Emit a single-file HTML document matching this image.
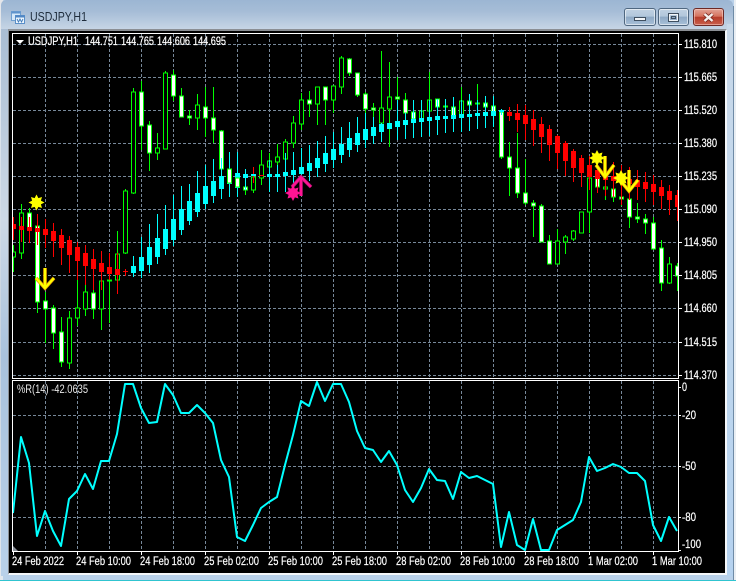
<!DOCTYPE html>
<html lang="en">
<head>
<meta charset="utf-8">
<title>USDJPY,H1</title>
<style>
html,body{margin:0;padding:0;background:#fff}
#w{position:relative;width:736px;height:581px;overflow:hidden;background:#b9d1ea;font-family:"Liberation Sans",sans-serif}
#corner{position:absolute;left:0;top:0;width:3px;height:581px;background:linear-gradient(180deg,#e4e6ea,#dfe6ee 15%,#c6d2de 60%,#e3e8ee)}
#left{position:absolute;left:1px;top:28px;width:8px;height:548px;background:linear-gradient(180deg,#a9bdd3,#cdd9e6 35%,#a9c2dc 60%,#b9d1ea)}
#title{position:absolute;left:1px;top:0;width:732px;height:29px;border-radius:5px 5px 0 0;background:linear-gradient(180deg,#9cb6d3,#a6bdd7 40%,#c6d5e5)}
#right{position:absolute;left:727px;top:24px;width:6px;height:552px;background:linear-gradient(180deg,#c8d8e8,#c2d8ee 40%,#b5d2ef)}
#edgeR{position:absolute;left:733px;top:6px;width:1px;height:574px;background:#6f8ba6}
#edgeR2{position:absolute;left:734px;top:0;width:2px;height:581px;background:#e9eef3}
#edgeB{position:absolute;left:0;top:580px;width:736px;height:1px;background:#30c4d0}
#client{position:absolute;left:8px;top:29px;width:719px;height:546px;box-sizing:border-box;background:#000;border:1px solid #8b8f94;border-top-width:2px;border-right:2px solid #f4f7fa;border-bottom:2px solid #f4f7fa}
.b{position:absolute;top:8px;height:18px;box-sizing:border-box;border:1px solid #4f6780;border-radius:3px;box-shadow:inset 0 0 0 1px rgba(255,255,255,.55);background:linear-gradient(180deg,#c0d1e2,#b2c7dc 45%,#8ea9c5 50%,#a9c0d8)}
#mn{left:624px;width:32px}
#mx{left:658px;width:31px}
#cl{left:693px;width:31px;border-color:#6d2a26;box-shadow:inset 0 0 0 1px rgba(255,220,210,.5);background:linear-gradient(180deg,#e2a497,#d6735f 45%,#b73c2a 52%,#c9604c)}
svg{position:absolute;left:0;top:0}
</style>
</head>
<body>
<div id="w">
<div id="corner"></div>
<div id="left"></div>
<div id="title"></div>
<div id="right"></div>
<div id="edgeR"></div>
<div id="edgeR2"></div>
<div id="edgeB"></div>
<div class="b" id="mn"></div>
<div class="b" id="mx"></div>
<div class="b" id="cl"></div>
<div id="client"></div>
<svg width="736" height="581" viewBox="0 0 736 581" xmlns="http://www.w3.org/2000/svg">
<defs>
<clipPath id="m"><rect x="13" y="34" width="665" height="344"/></clipPath>
<clipPath id="s"><rect x="13" y="381" width="665" height="170"/></clipPath>
</defs>

<!-- title icon -->
<g shape-rendering="crispEdges">
<rect x="11.500" y="11.500" width="9" height="9" fill="#d6e8f8" stroke="#6f9fd0"/>
<rect x="11.500" y="11.500" width="9" height="2" fill="#5f93cc"/>
<rect x="15.500" y="15.500" width="9" height="8" fill="#eef6fd" stroke="#5a8fc8"/>
<rect x="15.500" y="15.500" width="9" height="2" fill="#4f86c4"/>
</g>
<path d="M17 19l1.500 3 1.500-3 1.500 3 1.500-3" fill="none" stroke="#3c78b8" stroke-width=".9"/>
<text x="30" y="21" font-size="13" fill="#1e2c3c" textLength="57" lengthAdjust="spacingAndGlyphs" font-family="Liberation Sans, sans-serif">USDJPY,H1</text>

<!-- window glyphs -->
<rect x="634.500" y="17.500" width="11" height="3" fill="#f2f5f8" stroke="#3f4f60"/>
<rect x="668.500" y="13.500" width="10" height="8" fill="none" stroke="#3f4f60" stroke-width="1"/>
<rect x="669.500" y="14.500" width="8" height="6" fill="none" stroke="#f2f5f8" stroke-width="1"/>
<rect x="671.500" y="16.500" width="4" height="2" fill="#8ea9c5" stroke="#3f4f60"/>
<path d="M704.500 14l8 7M712.500 14l-8 7" stroke="#7a2a22" stroke-width="4" fill="none"/>
<path d="M704.500 14l8 7M712.500 14l-8 7" stroke="#f5f0ee" stroke-width="2.400" fill="none"/>

<!-- grid -->
<g shape-rendering="crispEdges" stroke="#778899" stroke-width="1" stroke-dasharray="3 2" fill="none">
<path d="M13 44.500H678M13 77.500H678M13 110.500H678M13 143.500H678M13 176.500H678M13 209.500H678M13 242.500H678M13 275.500H678M13 308.500H678M13 342.500H678M13 375.500H678"/>
<path d="M45.500 34V378M77.500 34V378M109.500 34V378M141.500 34V378M173.500 34V378M205.500 34V378M237.500 34V378M269.500 34V378M301.500 34V378M333.500 34V378M365.500 34V378M397.500 34V378M429.500 34V378M461.500 34V378M493.500 34V378M525.500 34V378M557.500 34V378M589.500 34V378M621.500 34V378M653.500 34V378"/>
<path d="M13 415.500H678M13 466.500H678M13 517.500H678"/>
<path d="M45.500 381V551M77.500 381V551M109.500 381V551M141.500 381V551M173.500 381V551M205.500 381V551M237.500 381V551M269.500 381V551M301.500 381V551M333.500 381V551M365.500 381V551M397.500 381V551M429.500 381V551M461.500 381V551M493.500 381V551M525.500 381V551M557.500 381V551M589.500 381V551M621.500 381V551M653.500 381V551"/>
</g>

<g clip-path="url(#m)" shape-rendering="crispEdges">
<!-- green wicks -->
<path fill="none" stroke="#00ff00" d="M13.500 245V272M21.500 204V259M29.500 208V230M37.500 214V313M45.500 292V343M53.500 305V349M61.500 317V367M69.500 311V369M77.500 279V326M85.500 284V316M93.500 287V319M101.500 281V330M109.500 280V323M117.500 231V294M125.500 189V254M133.500 88V194M141.500 81V150M149.500 121V171M157.500 133V160M165.500 71V149M173.500 70V101M181.500 88V117M189.500 110V125M197.500 94V130M205.500 87V137M213.500 87V143M221.500 130V170M229.500 168V184M237.500 175V188M245.500 185V195M253.500 175V193M261.500 150V185M269.500 153V192M277.500 144V170M285.500 139V170M293.500 116V148M301.500 93V130M309.500 91V117M317.500 87V125M325.500 87V125M333.500 86V113M341.500 56V94M349.500 58V76M357.500 73V97M365.500 92V113M373.500 103V117M381.500 51V123M389.500 62V147M397.500 77V100M405.500 93V114M413.500 112V120M421.500 111V120M429.500 72V111M437.500 99V108M445.500 106V110M453.500 107V118M461.500 87V116M469.500 94V106M477.500 84V106M485.500 96V108M493.500 96V115M501.500 109V159M509.500 142V196M517.500 133V198M525.500 159V205M533.500 200V237M541.500 204V242M549.500 235V264M557.500 229V264M565.500 235V254M573.500 230V241M581.500 212V233M589.500 177V233M597.500 178V190M605.500 187V200M613.500 189V202M621.500 197V206M629.500 199V228M637.500 203V223M645.500 214V234M653.500 217V250M661.500 240V291M669.500 257V284M677.500 263V291"/>
<!-- hollow bodies -->
<path fill="#000" stroke="#00ff00" d="M11.500 252h4V257h-4zM19.500 213h4V253h-4zM67.500 318h4V363h-4zM75.500 308h4V318h-4zM83.500 292h4V309h-4zM99.500 281h4V309h-4zM107.500 280h4V281h-4zM115.500 254h4V280h-4zM123.500 191h4V253h-4zM131.500 92h4V193h-4zM155.500 148h4V153h-4zM163.500 73h4V149h-4zM195.500 105h4V118h-4zM251.500 177h4V190h-4zM259.500 165h4V178h-4zM267.500 161h4V167h-4zM275.500 157h4V162h-4zM283.500 142h4V159h-4zM291.500 123h4V143h-4zM299.500 100h4V124h-4zM315.500 87h4V104h-4zM331.500 86h4V100h-4zM339.500 58h4V87h-4zM379.500 108h4V123h-4zM387.500 97h4V109h-4zM419.500 111h4V119h-4zM427.500 100h4V111h-4zM443.500 106h4V107h-4zM459.500 101h4V115h-4zM475.500 103h4V104h-4zM555.500 241h4V264h-4zM563.500 237h4V242h-4zM571.500 231h4V239h-4zM579.500 212h4V233h-4zM587.500 178h4V212h-4zM603.500 187h4V189h-4zM667.500 264h4V283h-4z"/>
<!-- white bodies -->
<path fill="#ffffff" stroke="#00ff00" d="M27.500 213h4V230h-4zM35.500 226h4V302h-4zM43.500 301h4V309h-4zM51.500 308h4V333h-4zM59.500 332h4V362h-4zM91.500 293h4V309h-4zM139.500 92h4V126h-4zM147.500 125h4V153h-4zM171.500 75h4V96h-4zM179.500 96h4V117h-4zM187.500 116h4V118h-4zM203.500 107h4V118h-4zM211.500 118h4V130h-4zM219.500 131h4V169h-4zM243.500 187h4V190h-4zM307.500 100h4V104h-4zM323.500 87h4V100h-4zM347.500 59h4V73h-4zM355.500 73h4V95h-4zM363.500 94h4V109h-4zM371.500 108h4V110h-4zM395.500 97h4V99h-4zM403.500 100h4V113h-4zM411.500 112h4V119h-4zM435.500 99h4V107h-4zM451.500 107h4V117h-4zM467.500 101h4V105h-4zM483.500 103h4V107h-4zM491.500 106h4V114h-4zM499.500 112h4V157h-4zM507.500 157h4V168h-4zM515.500 168h4V193h-4zM523.500 193h4V203h-4zM531.500 203h4V206h-4zM539.500 206h4V242h-4zM547.500 241h4V264h-4zM595.500 178h4V187h-4zM611.500 189h4V197h-4zM619.500 197h4V199h-4zM627.500 199h4V217h-4zM635.500 217h4V219h-4zM643.500 219h4V223h-4zM651.500 223h4V249h-4zM659.500 248h4V283h-4zM675.500 266h4V276h-4z"/>
<!-- red wicks -->
<path fill="none" stroke="#ff0000" d="M13.500 217V240M21.500 217V242M29.500 217V243M37.500 214V245M45.500 219V248M53.500 223V257M61.500 229V265M69.500 236V273M77.500 242V280M85.500 245V285M93.500 249V290M101.500 251V290M109.500 253V280M117.500 253V294M125.500 269V276M253.500 167V183M509.500 107V121M517.500 104V132M525.500 105V140M533.500 110V146M541.500 117V153M549.500 125V161M557.500 135V169M565.500 141V176M573.500 149V182M581.500 155V187M589.500 156V190M597.500 158V193M605.500 160V196M613.500 162V197M621.500 165V205M629.500 167V200M637.500 170V200M645.500 172V202M653.500 175V205M661.500 180V209M669.500 185V215M677.500 190V221"/>
<!-- cyan wicks -->
<path fill="none" stroke="#00ffff" d="M133.500 256V277M141.500 237V278M149.500 224V273M157.500 214V264M165.500 205V255M173.500 195V246M181.500 186V235M189.500 184V225M197.500 171V217M205.500 165V209M213.500 159V203M221.500 158V199M229.500 152V197M237.500 152V197M245.500 169V190M269.500 160V192M277.500 165V192M285.500 153V192M293.500 152V193M301.500 148V195M309.500 145V181M317.500 141V177M325.500 136V172M333.500 132V168M341.500 127V163M349.500 122V157M357.500 117V152M365.500 113V148M373.500 117V144M381.500 123V142M397.500 100V140M405.500 113V139M413.500 100V138M421.500 100V137M429.500 100V136M437.500 99V135M445.500 99V133M453.500 97V132M461.500 100V132M469.500 94V131M477.500 100V129M485.500 96V128M493.500 96V127M501.500 109V115"/>
<!-- red bodies -->
<path fill="#ff0000" d="M11 224h5V229h-5zM19 226h5V230h-5zM27 227h5V231h-5zM35 228h5V232h-5zM43 229h5V235h-5zM51 231h5V241h-5zM59 235h5V248h-5zM67 240h5V255h-5zM75 247h5V261h-5zM83 253h5V266h-5zM91 259h5V269h-5zM99 263h5V272h-5zM107 267h5V274h-5zM115 269h5V275h-5zM123 271h5V272h-5zM251 175h5V176h-5zM259 175h5V176h-5zM507 112h5V116h-5zM515 113h5V120h-5zM523 115h5V124h-5zM531 119h5V130h-5zM539 124h5V137h-5zM547 129h5V145h-5zM555 136h5V153h-5zM563 143h5V161h-5zM571 151h5V168h-5zM579 158h5V173h-5zM587 165h5V177h-5zM595 170h5V179h-5zM603 175h5V180h-5zM611 176h5V181h-5zM619 177h5V183h-5zM627 179h5V184h-5zM635 180h5V187h-5zM643 182h5V189h-5zM651 184h5V192h-5zM659 187h5V196h-5zM667 191h5V200h-5zM675 195h5V207h-5z"/>
<!-- cyan bodies -->
<path fill="#00ffff" d="M131 266h5V273h-5zM139 257h5V271h-5zM147 247h5V265h-5zM155 238h5V257h-5zM163 229h5V249h-5zM171 219h5V240h-5zM179 209h5V230h-5zM187 201h5V221h-5zM195 193h5V212h-5zM203 186h5V204h-5zM211 181h5V196h-5zM219 176h5V189h-5zM227 173h5V184h-5zM235 173h5V188h-5zM243 174h5V178h-5zM251 174h5V176h-5zM267 174h5V177h-5zM275 174h5V177h-5zM283 172h5V176h-5zM291 170h5V175h-5zM299 167h5V174h-5zM307 163h5V171h-5zM315 158h5V168h-5zM323 153h5V164h-5zM331 149h5V160h-5zM339 144h5V155h-5zM347 138h5V150h-5zM355 133h5V145h-5zM363 129h5V140h-5zM371 127h5V136h-5zM379 124h5V132h-5zM387 123h5V129h-5zM395 121h5V127h-5zM403 120h5V125h-5zM411 119h5V123h-5zM419 118h5V122h-5zM427 117h5V121h-5zM435 116h5V120h-5zM443 116h5V119h-5zM451 115h5V119h-5zM459 114h5V118h-5zM467 114h5V117h-5zM475 113h5V116h-5zM483 112h5V116h-5zM491 111h5V116h-5zM499 110h5V112h-5z"/>
<path fill="#ffffff" stroke="#00ff00" d="M227.500 169h4V183h-4zM235.500 178h4V187h-4z"/>
</g>

<!-- arrows and stars -->
<g clip-path="url(#m)" fill="none" stroke-linejoin="miter">
<g stroke="#e89a00" stroke-width="3.600">
<path d="M45 268V286M36 278L45 288L54 278"/>
<path d="M605 156V175M596 165L605 177L614 165"/>
<path d="M629 170V189M620 180L629 191L638 180"/>
</g>
<g stroke="#ffff00" stroke-width="2.200">
<path d="M45 268V286M36 278L45 288L54 278"/>
<path d="M605 156V175M596 165L605 177L614 165"/>
<path d="M629 170V189M620 180L629 191L638 180"/>
</g>
<g stroke="#b01070" stroke-width="3.600">
<path d="M301 178V196M292 187L301 177L311 187"/>
</g>
<g stroke="#ff1493" stroke-width="2.200">
<path d="M301 178V196M292 187L301 177L311 187"/>
</g>
</g>
<polygon transform="translate(36.500 202.500)" fill="#ffff00" points="0,-8 1.900,-4.400 5.500,-5.500 4.400,-1.900 8,0 4.400,1.900 5.500,5.500 1.900,4.400 0,8 -1.900,4.400 -5.500,5.500 -4.400,1.900 -8,0 -4.400,-1.900 -5.500,-5.500 -1.900,-4.400"/>
<polygon transform="translate(597 158)" fill="#ffff00" points="0,-8 1.900,-4.400 5.500,-5.500 4.400,-1.900 8,0 4.400,1.900 5.500,5.500 1.900,4.400 0,8 -1.900,4.400 -5.500,5.500 -4.400,1.900 -8,0 -4.400,-1.900 -5.500,-5.500 -1.900,-4.400"/>
<polygon transform="translate(621 178)" fill="#ffff00" points="0,-8 1.900,-4.400 5.500,-5.500 4.400,-1.900 8,0 4.400,1.900 5.500,5.500 1.900,4.400 0,8 -1.900,4.400 -5.500,5.500 -4.400,1.900 -8,0 -4.400,-1.900 -5.500,-5.500 -1.900,-4.400"/>
<polygon transform="translate(293 193)" fill="#ff1493" points="0,-8 1.900,-4.400 5.500,-5.500 4.400,-1.900 8,0 4.400,1.900 5.500,5.500 1.900,4.400 0,8 -1.900,4.400 -5.500,5.500 -4.400,1.900 -8,0 -4.400,-1.900 -5.500,-5.500 -1.900,-4.400"/>

<!-- indicator line -->
<g clip-path="url(#s)">
<polyline fill="none" stroke="#00ffff" stroke-width="2" stroke-linejoin="round" points="13,513 21,437 29,463 37,536 45,511 53,531 61,546 69,499 77,491 85,474 93,489 101,461 109,461 117,434 125,384 133,384 141,408 149,423 157,422 165,384 173,395 181,413 189,413 197,405 205,413 213,423 221,460 229,477 237,537 245,541 253,525 261,508 269,502 277,497 285,465 293,435 301,401 309,406 317,382 325,401 333,384 341,384 349,402 357,431 365,448 373,450 381,462 389,451 397,465 405,490 413,502 421,488 429,469 437,480 445,481 453,499 461,472 469,478 477,476 485,480 493,484 501,547 509,512 517,545 525,550 533,519 541,550 549,550 557,530 565,525 573,520 581,502 589,457 597,471 605,468 613,464 621,467 629,473 637,473 645,481 653,525 661,541 669,517 677,531"/>
</g>

<!-- frames and ticks -->
<g shape-rendering="crispEdges" fill="none" stroke="#ffffff">
<rect x="12.500" y="33.500" width="666" height="345"/>
<rect x="12.500" y="380.500" width="666" height="171"/>
<path d="M678 44.500h4M678 77.500h4M678 110.500h4M678 143.500h4M678 176.500h4M678 209.500h4M678 242.500h4M678 275.500h4M678 308.500h4M678 342.500h4M678 375.500h4"/>
<path d="M678 387.500h3M678 415.500h3M678 466.500h3M678 517.500h3M678 550.500h3"/>
<path d="M13.500 552v3M77.500 552v3M141.500 552v3M205.500 552v3M269.500 552v3M333.500 552v3M397.500 552v3M461.500 552v3M525.500 552v3M589.500 552v3M653.500 552v3"/>
</g>
<polygon points="13,546 18,551 13,551" fill="#8a8f98"/>
<polygon points="16,40 24,40 20,44" fill="#ffffff"/>

<!-- labels -->
<g font-size="11.500" fill="#ffffff" stroke="#ffffff" stroke-width=".2" font-family="Liberation Sans, sans-serif">
<text x="28" y="45" textLength="50" lengthAdjust="spacingAndGlyphs">USDJPY,H1</text>
<text x="85" y="45" textLength="33" lengthAdjust="spacingAndGlyphs">144.751</text>
<text x="121" y="45" textLength="33" lengthAdjust="spacingAndGlyphs">144.765</text>
<text x="157" y="45" textLength="33" lengthAdjust="spacingAndGlyphs">144.606</text>
<text x="193" y="45" textLength="33" lengthAdjust="spacingAndGlyphs">144.695</text>
<text x="684" y="48" textLength="33" lengthAdjust="spacingAndGlyphs">115.810</text>
<text x="684" y="81" textLength="33" lengthAdjust="spacingAndGlyphs">115.665</text>
<text x="684" y="114" textLength="33" lengthAdjust="spacingAndGlyphs">115.520</text>
<text x="684" y="147" textLength="33" lengthAdjust="spacingAndGlyphs">115.380</text>
<text x="684" y="180" textLength="33" lengthAdjust="spacingAndGlyphs">115.235</text>
<text x="684" y="213" textLength="33" lengthAdjust="spacingAndGlyphs">115.090</text>
<text x="684" y="246" textLength="33" lengthAdjust="spacingAndGlyphs">114.950</text>
<text x="684" y="279" textLength="33" lengthAdjust="spacingAndGlyphs">114.805</text>
<text x="684" y="312" textLength="33" lengthAdjust="spacingAndGlyphs">114.660</text>
<text x="684" y="346" textLength="33" lengthAdjust="spacingAndGlyphs">114.515</text>
<text x="684" y="379" textLength="33" lengthAdjust="spacingAndGlyphs">114.370</text>
<text x="682" y="391" textLength="5" lengthAdjust="spacingAndGlyphs">0</text>
<text x="682" y="419" textLength="14" lengthAdjust="spacingAndGlyphs">-20</text>
<text x="682" y="470" textLength="14" lengthAdjust="spacingAndGlyphs">-50</text>
<text x="682" y="521" textLength="14" lengthAdjust="spacingAndGlyphs">-80</text>
<text x="682" y="548" textLength="19" lengthAdjust="spacingAndGlyphs">-100</text>
<text x="17" y="393" textLength="71" lengthAdjust="spacingAndGlyphs" fill="#e8e8e8" stroke="none">%R(14) -42.0635</text>
<text x="12" y="565" textLength="52" lengthAdjust="spacingAndGlyphs">24 Feb 2022</text>
<text x="76" y="565" textLength="55" lengthAdjust="spacingAndGlyphs">24 Feb 10:00</text>
<text x="140" y="565" textLength="55" lengthAdjust="spacingAndGlyphs">24 Feb 18:00</text>
<text x="204" y="565" textLength="55" lengthAdjust="spacingAndGlyphs">25 Feb 02:00</text>
<text x="268" y="565" textLength="55" lengthAdjust="spacingAndGlyphs">25 Feb 10:00</text>
<text x="332" y="565" textLength="55" lengthAdjust="spacingAndGlyphs">25 Feb 18:00</text>
<text x="396" y="565" textLength="55" lengthAdjust="spacingAndGlyphs">28 Feb 02:00</text>
<text x="460" y="565" textLength="55" lengthAdjust="spacingAndGlyphs">28 Feb 10:00</text>
<text x="524" y="565" textLength="55" lengthAdjust="spacingAndGlyphs">28 Feb 18:00</text>
<text x="588" y="565" textLength="50" lengthAdjust="spacingAndGlyphs">1 Mar 02:00</text>
<text x="652" y="565" textLength="50" lengthAdjust="spacingAndGlyphs">1 Mar 10:00</text>
</g>
</svg>
</div>
</body>
</html>
